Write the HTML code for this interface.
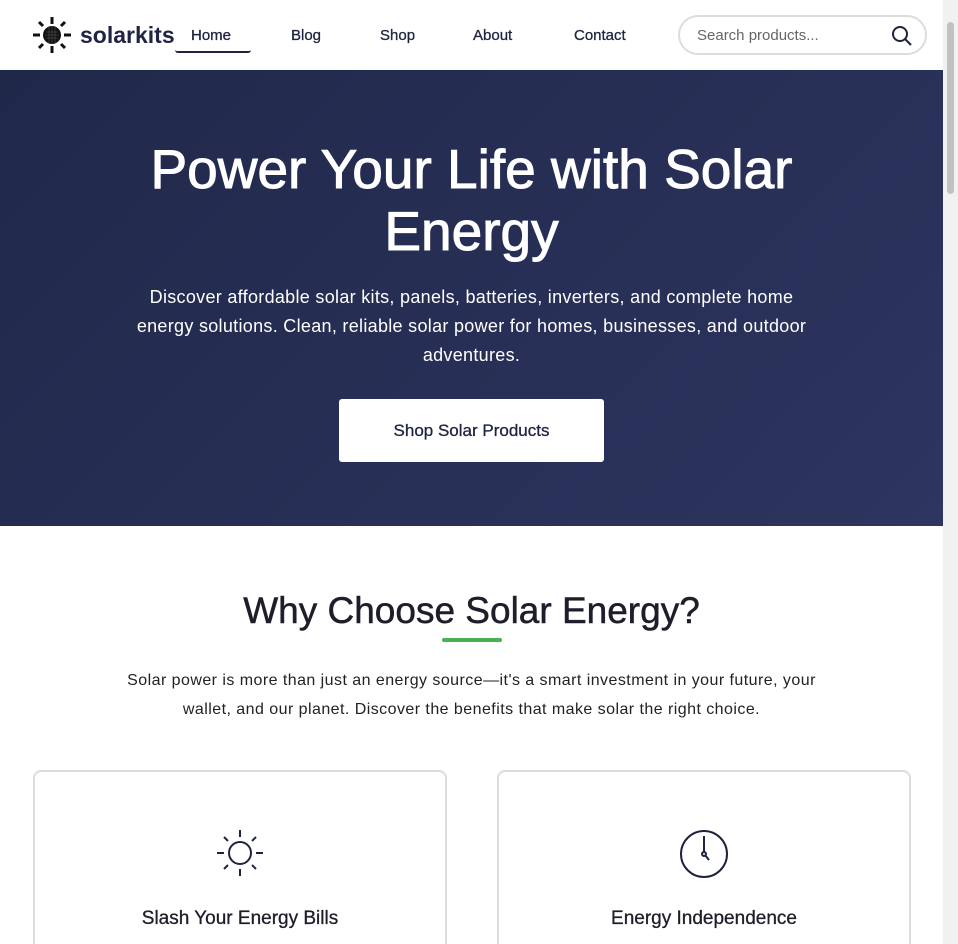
<!DOCTYPE html>
<html><head><meta charset="utf-8"><style>
*{margin:0;padding:0;box-sizing:border-box}
html,body{width:958px;height:944px;overflow:hidden}
body{font-family:"Liberation Sans",sans-serif;background:#fff;position:relative;color:#1f2340}
.sb{position:absolute;right:0;top:0;width:15px;height:944px;background:#f1f1f1}
.sb i{position:absolute;left:4px;top:22px;width:7px;height:172px;background:#c1c1c1;border-radius:4px}
header{position:absolute;left:0;top:0;width:943px;height:70px;background:#fff}
.logo{position:absolute;left:33px;top:17px}
.brand{position:absolute;left:80px;top:22px;font-size:23px;font-weight:bold;color:#1f2445}
nav a{position:absolute;top:27px;font-size:15px;color:#1f2340;text-decoration:none;-webkit-text-stroke:.3px #1f2340}
.home{position:absolute;left:175px;top:50px;width:76px;height:3px;border-bottom:2px solid #1f2340;border-radius:0 0 6px 6px}
.search{position:absolute;left:678px;top:15px;width:249px;height:40px;border:2px solid #ddd;border-radius:20px;font-size:15px;color:#666;padding:10px 0 0 17px}
.hero{position:absolute;left:0;top:70px;width:943px;height:456px;background:linear-gradient(135deg,#20284a,#2d3560);color:#fff;text-align:center}
.hero h1{position:absolute;left:0;width:943px;top:68px;font-size:55px;font-weight:normal;line-height:62px;-webkit-text-stroke:1px #fff}
.hero p{position:absolute;left:0;width:943px;top:213px;font-size:18px;letter-spacing:.3px;line-height:29px;white-space:nowrap}
.btn{position:absolute;left:339px;top:329px;width:265px;height:63px;background:#fff;border-radius:3px;color:#1f2340;font-size:17px;line-height:63px;-webkit-text-stroke:.3px #1f2340}
h2{position:absolute;left:0;width:943px;top:590px;text-align:center;font-size:37px;font-weight:normal;color:#1e1e2a;-webkit-text-stroke:.5px #1e1e2a}
.ul{position:absolute;left:442px;top:638px;width:60px;height:4px;background:#4caf50;border-radius:2px}
.intro{position:absolute;left:0;width:943px;top:666px;text-align:center;font-size:16px;letter-spacing:.45px;line-height:29px;color:#222;white-space:nowrap}
.card{position:absolute;top:770px;width:414px;height:200px;border:2px solid #ddd;border-radius:8px;text-align:center}
.card h3{position:absolute;left:0;width:100%;top:136px;font-size:19px;font-weight:normal;color:#1e1e2a;-webkit-text-stroke:.3px #1e1e2a}
</style></head><body>
<header>
<svg class="logo" width="38" height="36" viewBox="0 0 38 36"><g stroke="#111" stroke-width="3"><line x1="19" y1="0" x2="19" y2="7"/><line x1="19" y1="29" x2="19" y2="36"/><line x1="0" y1="18" x2="7" y2="18"/><line x1="31" y1="18" x2="38" y2="18"/><line x1="6" y1="5" x2="10" y2="9"/><line x1="28" y1="27" x2="32" y2="31"/><line x1="32" y1="5" x2="28" y2="9"/><line x1="6" y1="31" x2="10" y2="27"/></g><circle cx="19" cy="18" r="9" fill="#111"/><g stroke="#555" stroke-width=".6"><line x1="13" y1="15" x2="25" y2="15"/><line x1="12" y1="18" x2="26" y2="18"/><line x1="13" y1="21" x2="25" y2="21"/><line x1="16" y1="10" x2="16" y2="26"/><line x1="19" y1="9" x2="19" y2="27"/><line x1="22" y1="10" x2="22" y2="26"/></g></svg>
<div class="brand">solarkits</div>
<nav><a style="left:191px">Home</a><a style="left:291px">Blog</a><a style="left:380px">Shop</a><a style="left:473px">About</a><a style="left:574px">Contact</a></nav>
<div class="home"></div>
<div class="search">Search products...<svg style="position:absolute;right:12px;top:8px" width="22" height="22" viewBox="0 0 22 22"><circle cx="9" cy="9" r="7" fill="none" stroke="#1f2340" stroke-width="2"/><line x1="14" y1="14" x2="20" y2="20" stroke="#1f2340" stroke-width="2"/></svg></div>
</header>
<div class="hero">
<h1>Power Your Life with Solar<br>Energy</h1>
<p>Discover affordable solar kits, panels, batteries, inverters, and complete home<br>energy solutions. Clean, reliable solar power for homes, businesses, and outdoor<br>adventures.</p>
<div class="btn">Shop Solar Products</div>
</div>
<h2>Why Choose Solar Energy?</h2>
<div class="ul"></div>
<div class="intro">Solar power is more than just an energy source—it's a smart investment in your future, your<br>wallet, and our planet. Discover the benefits that make solar the right choice.</div>
<div class="card" style="left:33px"><svg style="position:absolute;left:180px;top:56px" width="50" height="50" viewBox="0 0 50 50" fill="none" stroke="#1f2340" stroke-width="2"><circle cx="25" cy="25" r="11"/><line x1="25" y1="2" x2="25" y2="9"/><line x1="25" y1="41" x2="25" y2="48"/><line x1="2" y1="25" x2="9" y2="25"/><line x1="41" y1="25" x2="48" y2="25"/><line x1="9" y1="9" x2="13" y2="13"/><line x1="37" y1="37" x2="41" y2="41"/><line x1="41" y1="9" x2="37" y2="13"/><line x1="9" y1="41" x2="13" y2="37"/></svg><h3>Slash Your Energy Bills</h3></div>
<div class="card" style="left:497px"><svg style="position:absolute;left:179px;top:56px" width="52" height="52" viewBox="0 0 52 52" fill="none" stroke="#1f2340" stroke-width="2"><circle cx="26" cy="26" r="23"/><line x1="26" y1="8" x2="26" y2="24"/><circle cx="26" cy="26" r="2"/><line x1="27" y1="27" x2="31" y2="32"/></svg><h3>Energy Independence</h3></div>
<div class="sb"><i></i></div>
</body></html>
